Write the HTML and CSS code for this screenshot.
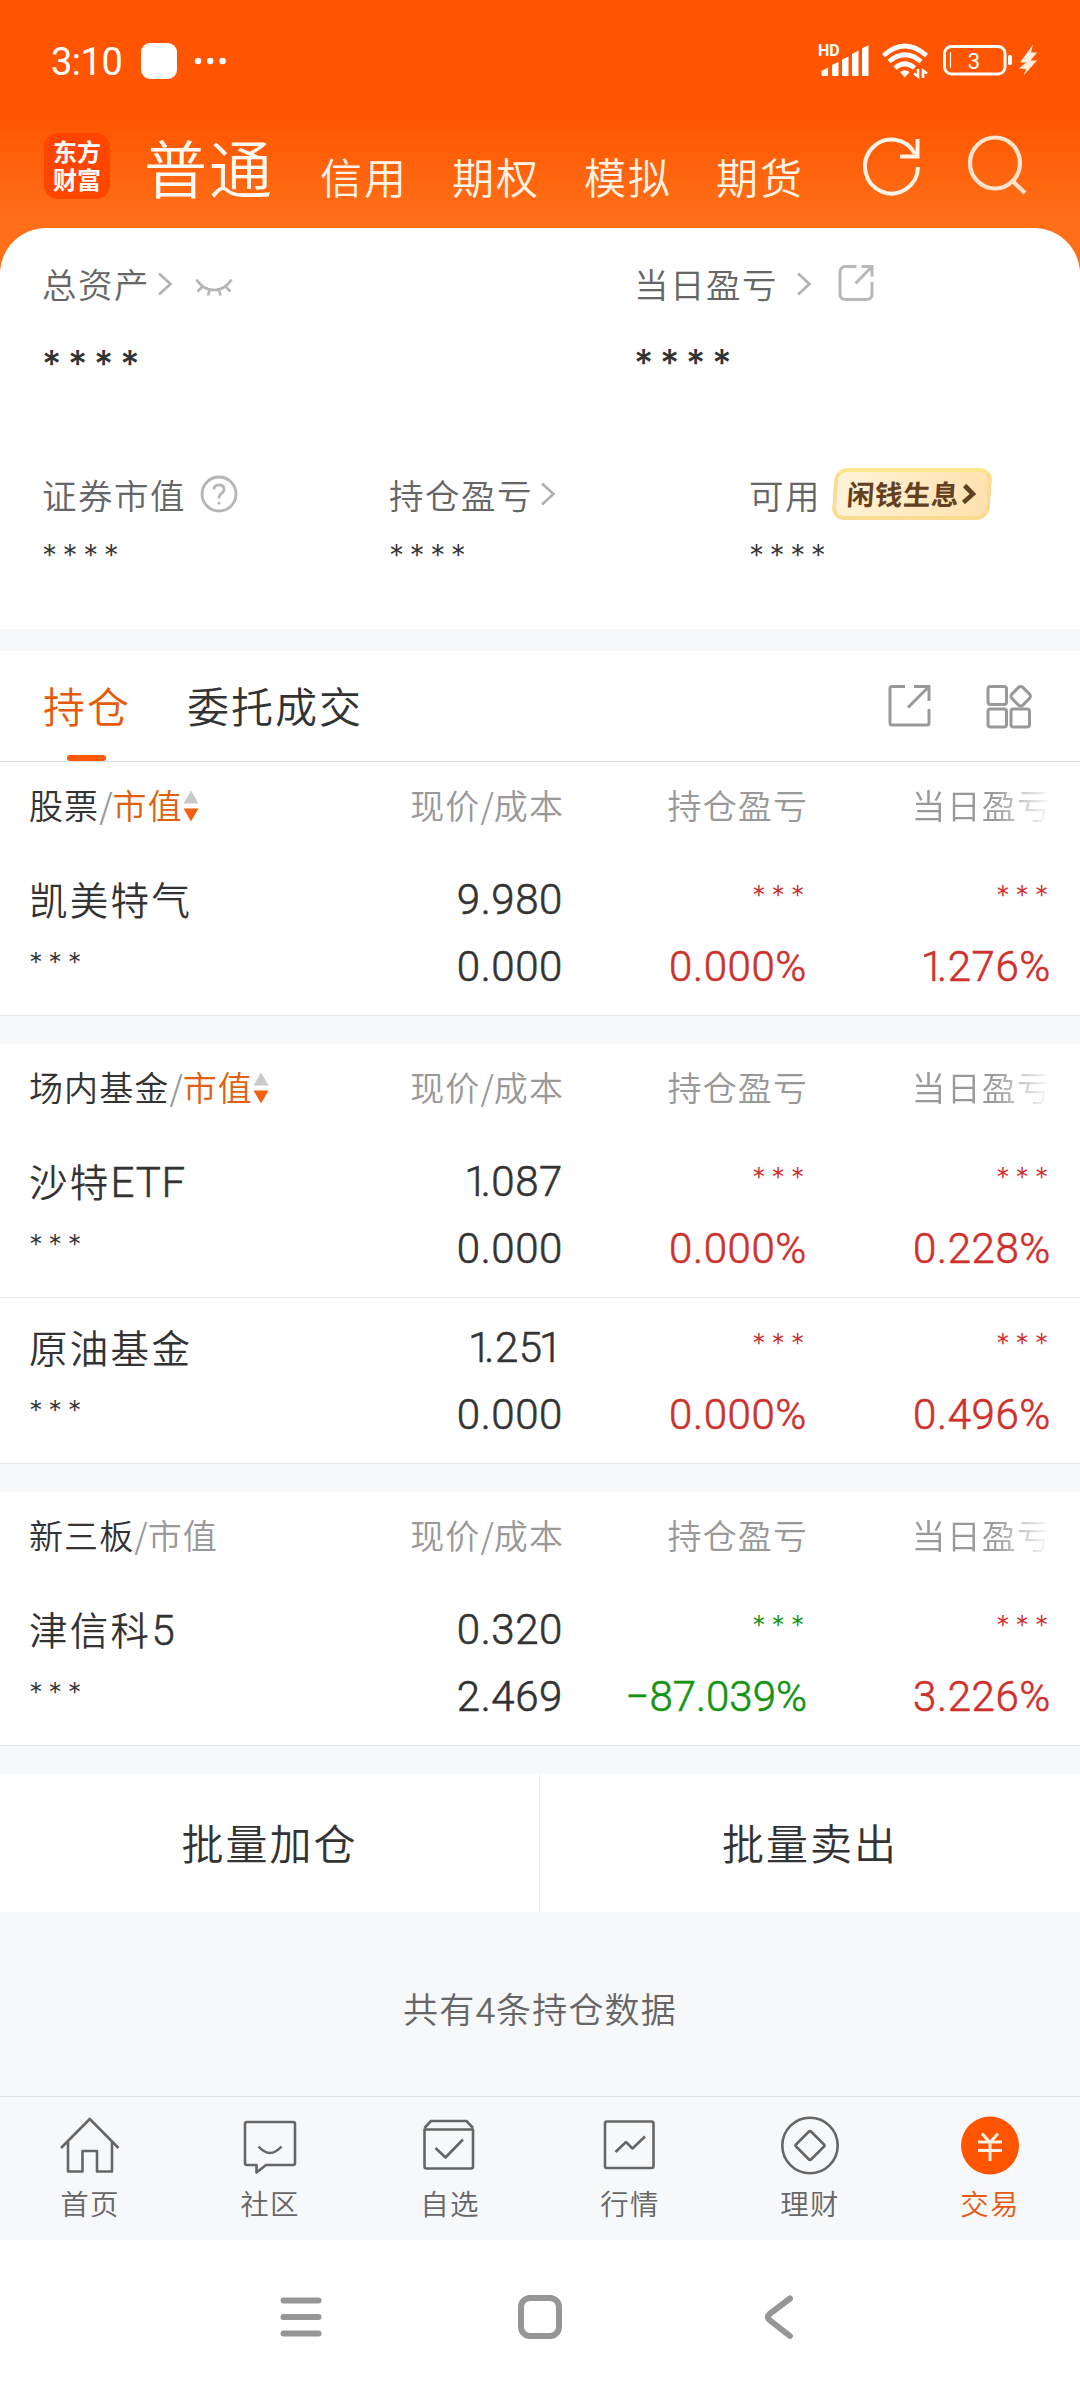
FILE: index.html
```html
<!DOCTYPE html>
<html lang="zh-CN">
<head>
<meta charset="utf-8">
<title>交易</title>
<link rel="stylesheet" href="styles.css">
</head>
<body>
<svg class="defs" width="0" height="0" aria-hidden="true">
  <symbol id="chevron" viewBox="0 0 16 26"><path d="M2 2.500L13.500 13L2 23.500"/></symbol>
  <symbol id="sort" viewBox="0 0 16 32"><path fill="#c9c9c9" d="M8 0.500L15.500 13.500H0.500Z"/><path fill="#f4600f" d="M0.500 18.500H15.500L8 31.500Z"/></symbol>
</svg>

<header class="top">
  <div class="status">
    <span class="time">3:10</span>
    <span class="notice"></span>
    <svg class="dots" width="32" height="8" viewBox="0 0 32 8"><circle cx="4" cy="4" r="3.200"/><circle cx="16.200" cy="4" r="3.200"/><circle cx="28.600" cy="4" r="3.200"/></svg>
    <svg class="sys" width="226" height="40" viewBox="815 42 226 40">
      <text class="hd" x="818" y="57">HD</text>
      <path fill="#fff" d="M821.500 72L828 68.500V77H823Q821.500 77 821.500 75.500ZM832 66L838.500 63V77H833.500Q832 77 832 75.500ZM842 60.500L848.500 57.500V77H843.500Q842 77 842 75.500ZM852 55L858.500 51.500V77H853.500Q852 77 852 75.500ZM862 49.500L868.500 46V77H863.500Q862 77 862 75.500Z"/>
      <g fill="none" stroke="#fff" stroke-width="4.600"><path d="M883.500 56.500Q904.800 37.500 926.500 56.500"/><path d="M889 62.500Q904.800 49 921 62.500"/><path d="M895 69Q904.800 60.500 914.500 69"/></g>
      <path fill="#fff" d="M900 73Q904.800 69.500 909.500 73L904.800 78.500Z"/>
      <path fill="none" stroke="#fff" stroke-width="2.600" d="M914 74.500L918 77.500V70M923 79V71.500L927 74.500"/>
      <rect x="944.500" y="47.500" width="60.500" height="27.500" rx="7" fill="none" stroke="#fff" stroke-width="3"/>
      <rect x="1008" y="56" width="4" height="10" rx="1.500" fill="#fff"/>
      <path stroke="#fff" stroke-width="1.200" d="M950.500 53V69"/>
      <text class="pct" x="974" y="69.500">3</text>
      <path fill="#ffeede" d="M1033 45.500L1020 63.500H1026L1019 69.500L1026 70L1023.500 76.500L1037 61.500H1030.500L1037 53.500H1031Z"/>
    </svg>
  </div>
  <nav class="accounts">
    <div class="logo">东方财富</div>
    <span class="acct current">普通</span>
    <span class="acct">信用</span>
    <span class="acct">期权</span>
    <span class="acct">模拟</span>
    <span class="acct">期货</span>
    <svg class="refresh" width="60" height="62" viewBox="862 135 60 62" fill="none" stroke="#fff4e6" stroke-width="4"><path d="M918 167A26.500 27 0 1 1 915 154"/><path d="M917.500 139V156.500H900"/></svg>
    <svg class="search" width="62" height="62" viewBox="966 133 62 62" fill="none" stroke="#ffe3cd" stroke-width="4.200"><ellipse cx="995" cy="163" rx="25" ry="25.500"/><path d="M1012.500 181L1025 193"/></svg>
  </nav>
</header>

<main>
<section class="assets">
  <div class="primary">
    <div class="cell">
      <div class="label">总资产<svg class="chev c1"><use href="#chevron"/></svg><svg class="eye" width="38" height="20" viewBox="0 0 38 20"><path d="M1.500 1.500Q8 12 19 12Q30 12 36.500 1.500M7 9L2.500 13.500M14.500 12L13 17.500M24 12L25.500 17.500M31 9L35.500 13.500"/></svg></div>
      <div class="stars big">****</div>
    </div>
    <div class="cell">
      <div class="label">当日盈亏<svg class="chev c2"><use href="#chevron"/></svg><svg class="share" width="36" height="38" viewBox="0 0 36 38"><path d="M18.500 2.500H8Q2 2.500 2 8.500V30Q2 35.500 8 35.500H28Q34 35.500 34 30V18M23.500 2.500H34V12.500M34 2.500L17.500 19.500"/></svg></div>
      <div class="stars big up1">****</div>
    </div>
  </div>
  <div class="secondary">
    <div class="cell">
      <div class="label">证券市值<svg class="help" width="38" height="38" viewBox="0 0 38 38"><circle cx="19" cy="19" r="17"/><path d="M14 14.500Q14 9.800 19 9.800Q24 9.800 24 14.200Q24 17 21.300 18.600Q19 20 19 23.500"/><circle class="pt" cx="19" cy="28" r="1.600"/></svg></div>
      <div class="stars small">****</div>
    </div>
    <div class="cell">
      <div class="label">持仓盈亏<svg class="chev c3"><use href="#chevron"/></svg></div>
      <div class="stars small">****</div>
    </div>
    <div class="cell">
      <div class="label">可用<span class="badge"><span>闲钱生息</span><svg width="14" height="22" viewBox="0 0 14 22"><path d="M2 2.500L11 11L2 19.500"/></svg></span></div>
      <div class="stars small">****</div>
    </div>
  </div>
</section>

<section class="tabs">
  <span class="tab active">持仓</span>
  <span class="tab">委托成交</span>
  <svg class="open" width="44" height="46" viewBox="887 683 44 46"><path d="M905 686.500H892Q890 686.500 890 688.500V723Q890 725 892 725H927Q929 725 929 723V709M914 686.500H929V701M928 687.500L908 707.500"/></svg>
  <svg class="grid" width="48" height="48" viewBox="985 682 48 48"><rect x="988" y="686.500" width="18.500" height="18" rx="2.500"/><rect x="988" y="709" width="18.500" height="18" rx="2.500"/><rect x="1011" y="709" width="18.500" height="18" rx="2.500"/><rect x="1013" y="688.500" width="15.500" height="15.500" rx="3" transform="rotate(45 1020.700 696.200)"/></svg>
</section>

<section class="group">
  <div class="head"><div>股票<i>/</i><b>市值</b><svg class="sort"><use href="#sort"/></svg></div><div>现价<i>/</i>成本</div><div>持仓盈亏</div><div class="fade">当日盈亏</div></div>
  <div class="row"><div><span class="name">凯美特气</span><span class="stars">***</span></div><div><span class="num">9.980</span><span class="num">0.000</span></div><div class="red"><span class="stars">***</span><span class="num">0.000%</span></div><div class="red"><span class="stars">***</span><span class="num"><em class="one">1</em>.276%</span></div></div>
</section>

<section class="group">
  <div class="head"><div>场内基金<i>/</i><b>市值</b><svg class="sort"><use href="#sort"/></svg></div><div>现价<i>/</i>成本</div><div>持仓盈亏</div><div class="fade">当日盈亏</div></div>
  <div class="row"><div><span class="name">沙特<em>ETF</em></span><span class="stars">***</span></div><div><span class="num"><em class="one">1</em>.087</span><span class="num">0.000</span></div><div class="red"><span class="stars">***</span><span class="num">0.000%</span></div><div class="red"><span class="stars">***</span><span class="num">0.228%</span></div></div>
  <div class="row"><div><span class="name">原油基金</span><span class="stars">***</span></div><div><span class="num"><em class="one">1</em>.2<em class="five">5</em>1</span><span class="num">0.000</span></div><div class="red"><span class="stars">***</span><span class="num">0.000%</span></div><div class="red"><span class="stars">***</span><span class="num">0.496%</span></div></div>
</section>

<section class="group">
  <div class="head plain"><div>新三板<i>/</i><b>市值</b></div><div>现价<i>/</i>成本</div><div>持仓盈亏</div><div class="fade">当日盈亏</div></div>
  <div class="row"><div><span class="name">津信科<em>5</em></span><span class="stars">***</span></div><div><span class="num">0.320</span><span class="num">2.469</span></div><div class="green"><span class="stars">***</span><span class="num tight">−87.039%</span></div><div class="red"><span class="stars">***</span><span class="num">3.226%</span></div></div>
</section>

<div class="batch"><span>批量加仓</span><span>批量卖出</span></div>
<p class="count">共有<em>4</em>条持仓数据</p>
</main>

<nav class="tabbar">
  <a><svg viewBox="0 0 64 64"><path d="M3 35L31.800 6L60.500 35M10 29V58.500H24.500V38H39V58.500H54V29"/></svg>首页</a>
  <a><svg viewBox="0 0 64 64"><path d="M9 9H55Q57 9 57 11V50Q57 52 55 52H28L18.500 59.500V52H9Q7 52 7 50V11Q7 9 9 9ZM20.500 33.500Q32 46.500 43.500 33.500"/></svg>社区</a>
  <a><svg viewBox="0 0 64 64"><path d="M6.500 15L13 8H48.500L55 15M6.500 16.500H55V53.500Q55 55.500 53 55.500H8.500Q6.500 55.500 6.500 53.500ZM17.500 35L27.500 44.500L45 26.500"/></svg>自选</a>
  <a><svg viewBox="0 0 64 64"><path d="M9 8.500H53.500Q55.500 8.500 55.500 10.500V53Q55.500 55 53.500 55H9Q7 55 7 53V10.500Q7 8.500 9 8.500ZM17.500 39L28 29L34.500 35.500L47 23.500"/></svg>行情</a>
  <a><svg viewBox="0 0 64 64"><circle cx="32" cy="32.500" r="27.700"/><path d="M30.500 19Q32 17.500 33.500 19L46 31.500Q47 32.500 46 33.500L33.500 46Q32 47.500 30.500 46L18 33.500Q17 32.500 18 31.500Z"/></svg>理财</a>
  <a class="on"><svg viewBox="0 0 64 64"><circle cx="32" cy="32.500" r="29"/><path d="M24 20.500L32 29.500L40 20.500M32 29V48M20 29H44M20 37.500H44"/></svg>交易</a>
</nav>
<footer class="sysnav">
  <svg viewBox="0 0 48 48"><path d="M6.500 7.500H41.500M6.500 24H41.500M6.500 40.500H41.500"/></svg>
  <svg viewBox="0 0 48 48"><rect x="5" y="5" width="38" height="38" rx="9"/></svg>
  <svg viewBox="0 0 48 48"><path d="M35 5.500L14.500 21Q11.500 24 14.500 27L35 43"/></svg>
</footer>
</body>
</html>
```
FILE: styles.css
```css
* { box-sizing: border-box; }
body {
  margin: 0; width: 1080px; height: 2400px; background: #f7f8fa; color: #333;
  font-family: "Noto Sans CJK SC", sans-serif; font-weight: 350;
  display: flex; flex-direction: column;
}
.defs { position: absolute; }
svg { flex: none; }
i, em, b { font-style: normal; font-weight: inherit; }
em { font-family: Roboto, sans-serif; font-weight: 300; -webkit-text-stroke: 0.5px currentColor; }

.top { height: 274px; flex: none; background: linear-gradient(#ff5500 0, #ff5500 115px, #ff6f18 215px, #ff6f18 100%); color: #fff; }
.status { height: 122px; display: flex; align-items: center; padding: 0 39px 0 51px; }
.time { font: 400 38px/44px Roboto, sans-serif; width: 90px; letter-spacing: -0.5px; padding-top: 1px; }
.notice { width: 36px; height: 36px; border-radius: 9px; background: #fff; margin-right: 17px; }
.dots { fill: #fff; }
.sys { margin-left: auto; }
.hd { font: 700 16px Roboto, sans-serif; fill: #fff; }
.pct { font: 400 22px Roboto, sans-serif; fill: #fff; text-anchor: middle; }
.accounts { height: 106px; display: flex; align-items: flex-start; padding-left: 44px; }
.logo {
  width: 66px; height: 66px; margin-top: 11px; border-radius: 14px; background: #ff4600;
  font-weight: 700; font-size: 24px; line-height: 28px; padding: 4px 8px 0 9px;
}
.acct { color: #fff4e6; font-size: 42px; line-height: 60px; letter-spacing: 2px; width: 88px; margin: 24px 0 0 44px; white-space: nowrap; }
.acct.current { color: #fffaf2; font-size: 63px; line-height: 80px; letter-spacing: 2px; width: 130px; margin: 4px 2px 0 34px; }
.refresh { margin: 13px 0 0 58px; }
.search { margin: 11px 0 0 44px; }

main { display: flex; flex-direction: column; margin-top: -46px; flex: none; }
.assets { height: 401px; background: #fff; border-radius: 46px 46px 0 0; color: #666; padding: 32px 42px 0; }
.primary { display: grid; grid-template-columns: 592px 1fr; height: 211px; }
.secondary { display: grid; grid-template-columns: 347px 360px 1fr; }
.label { display: flex; align-items: center; height: 46px; font-size: 34.500px; letter-spacing: 1.5px; line-height: 42px; white-space: nowrap; }
.chev { width: 16px; height: 26px; fill: none; stroke: #b0b0b0; stroke-width: 2.6px; }
.c1, .c2 { margin-top: 1px; }
.c1 { margin-left: 7px; }
.c2 { margin-left: 18px; }
.c3 { margin-left: 7px; }
.eye { margin: 10px 0 0 22px; fill: none; stroke: #b5b5b5; stroke-width: 2.6px; }
.share { margin-left: 26px; fill: none; stroke: #b8b8b8; stroke-width: 3px; }
.help { margin-left: 14px; fill: none; stroke: #b5b5b5; stroke-width: 2.8px; }
.help .pt { fill: #b5b5b5; stroke: none; }
.badge {
  width: 158px; height: 52px; margin-left: 12px; border-radius: 13px; border: 4px solid #f9dc92; border-top-color: #fbe68f;
  background: linear-gradient(100deg, #fff3d8, #ffe1ae); transform: skewX(-4deg);
  display: flex; align-items: center; padding-left: 10px; color: #63401f;
  font-size: 27.500px; font-weight: 700; letter-spacing: 0.6px;
}
.badge span { line-height: 40px; margin-top: -2px; }
.badge svg { fill: none; stroke: #63401f; stroke-width: 4.5px; margin-left: 3px; }
.stars { font-family: Inter, sans-serif; font-weight: 350; color: #333; }
.stars.big { font-size: 37px; line-height: 46px; letter-spacing: 6.800px; padding-top: 35px; font-weight: 450; }
.stars.big.up1 { padding-top: 34px; }
.stars.small { font-size: 30px; line-height: 40px; letter-spacing: 5.600px; padding-top: 18px; }

.tabs { height: 111px; margin-top: 22px; background: #fff; border-bottom: 1px solid #dcdedf; display: flex; align-items: center; padding-left: 43px; }
.tab { position: relative; font-size: 42px; letter-spacing: 2px; line-height: 108px; height: 110px; margin-right: 56px; }
.tab.active { color: #e65a0c; }
.tab.active::after { content: ""; position: absolute; left: 24px; bottom: 0; width: 39px; height: 6px; border-radius: 3px; background: #f95a0a; }
.open { margin-left: auto; fill: none; stroke: #999; stroke-width: 3px; }
.grid { margin: 0 47px 0 54px; fill: none; stroke: #999; stroke-width: 3px; }

.group { background: #fff; margin-bottom: 28px; }
.head, .row { display: grid; grid-template-columns: 290px 244px 244px 244px; padding: 0 29px; }
.head { height: 88px; color: #999; font-size: 34px; letter-spacing: 1.1px; line-height: 86px; white-space: nowrap; }
.head i { color: #999; letter-spacing: 0; }
.head > div:first-child { color: #333; display: flex; }
.head > div + div, .row > div + div { text-align: right; }
.head > div + div { position: relative; left: 1px; }
.head b { color: #e0600f; }
.head.plain b { color: #999; }
.fade { -webkit-mask-image: linear-gradient(90deg, #000 76%, rgba(0,0,0,.08) 98%); mask-image: linear-gradient(90deg, #000 76%, rgba(0,0,0,.08) 98%); }
.sort { width: 16px; height: 32px; margin-top: 28px; }
.row { height: 166px; border-bottom: 1px solid #e8e9eb; padding-top: 16px; }
.row > div { display: flex; flex-direction: column; }
.row span { height: 67px; line-height: 67px; white-space: nowrap; }
.row .name { font-size: 38.500px; letter-spacing: 2.3px; line-height: 64px; }
.name em { font-size: 42px; letter-spacing: 0.8px; }
.num { font-family: Roboto, sans-serif; font-weight: 300; font-size: 42px; letter-spacing: 0.6px; -webkit-text-stroke: 0.6px currentColor; }
.num.tight { letter-spacing: 0; }
.num .one { letter-spacing: -7px; }
.num .five { letter-spacing: -3px; }
.row .stars { font-size: 27.500px; letter-spacing: 5.600px; line-height: 59px; }
.row > div + div .stars { margin-right: -3px; }
.red .num, .red .stars { color: #cf302c; }
.green .num, .green .stars { color: #149414; }

.batch { height: 138px; background: #fff; display: grid; grid-template-columns: 1fr 1fr; text-align: center; font-size: 42px; letter-spacing: 2px; line-height: 136px; }
.batch span:first-child { border-right: 1px solid #eceef0; }
.count { margin: 0; height: 184px; color: #666; font-size: 35px; letter-spacing: 1.2px; line-height: 192px; text-align: center; }
.tabbar { height: 144px; flex: none; background: #f7f8fa; border-top: 1px solid #dedfe1; display: grid; grid-template-columns: repeat(6, 180px); }
.tabbar a { display: flex; flex-direction: column; align-items: center; padding-top: 16px; font-size: 28.500px; letter-spacing: 1.2px; line-height: 51px; color: #666; }
.tabbar svg { width: 64px; height: 64px; fill: none; stroke: #666; stroke-width: 2.6px; stroke-linejoin: round; }
.tabbar .on { color: #e45a10; }
.tabbar .on circle { fill: #ff5500; stroke: none; }
.tabbar .on path { stroke: #fff0e0; stroke-width: 3px; }
.sysnav { height: 160px; flex: none; background: #fff; display: flex; justify-content: center; gap: 191px; padding-top: 53px; }
.sysnav svg { width: 48px; height: 48px; fill: none; stroke: #969696; stroke-width: 6px; stroke-linecap: round; }
```
